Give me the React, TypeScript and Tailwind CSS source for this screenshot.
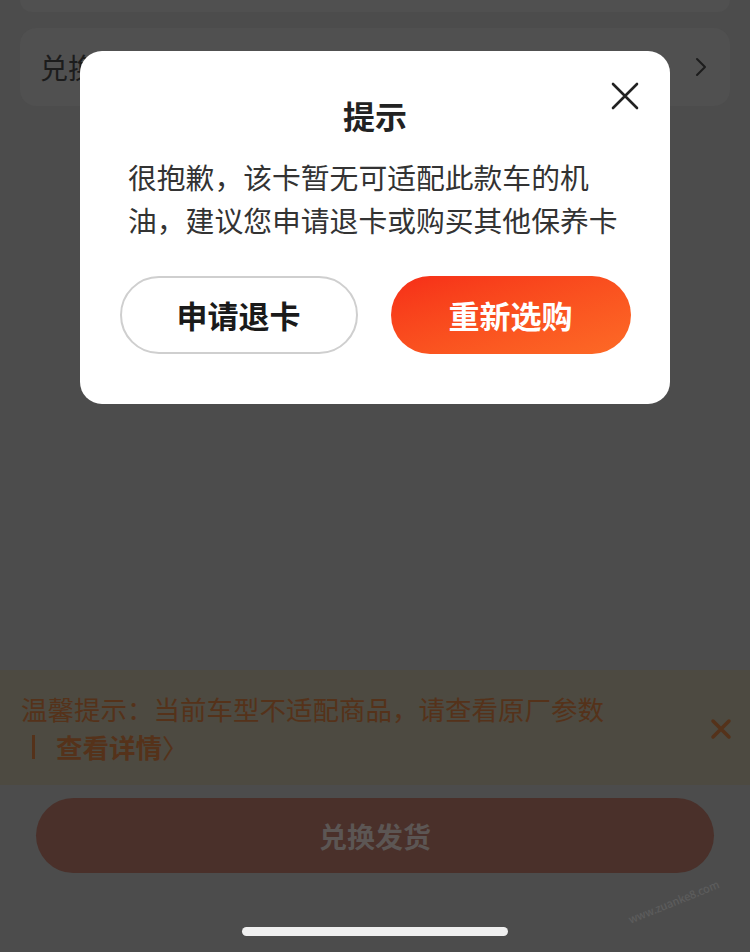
import React from "react";

export default function App() {
  const font = { fontFamily: '"Noto Sans CJK SC", "Noto Sans", sans-serif' };
  return (
    <div className="relative w-[750px] h-[952px] overflow-hidden bg-[#4c4c4c]" style={font}>
      {/* background page (dimmed) */}
      <div className="flex flex-col h-full">
        <div className="mx-[20px] h-[12px] rounded-b-[16px] bg-[#505050]" />
        <div className="mx-[20px] mt-[16px] h-[78px] rounded-[16px] bg-[#505050] flex items-center justify-between pl-[20px] pr-[22px]">
          <span className="text-[28px] text-[#1c1c1c] leading-none">兑换商品</span>
          <svg width="14" height="22" viewBox="0 0 14 22" fill="none">
            <path d="M3 3l8 8-8 8" stroke="#1c1c1c" strokeWidth="2" strokeLinecap="round" strokeLinejoin="round" />
          </svg>
        </div>
        <div className="flex-1" />
        <div className="h-[115px] bg-[#4d4a41] flex items-center pl-[21px] pr-[18px] mb-[13px]">
          <div className="flex-1 text-[26.5px] leading-[38px] text-[#55321a]">
            <div className="whitespace-nowrap">温馨提示：当前车型不适配商品，请查看原厂参数</div>
            <div className="whitespace-nowrap flex items-center">
              <span className="inline-block w-[3px] h-[24px] bg-[#55321a] ml-[11px] mr-[21px]" />
              <span className="font-bold">查看详情</span>
              <span>〉</span>
            </div>
          </div>
          <svg width="22" height="22" viewBox="0 0 22 22" className="mt-[2px]">
            <path d="M3 3l16 16M19 3L3 19" stroke="#55321a" strokeWidth="3.5" strokeLinecap="round" />
          </svg>
        </div>
        <div className="mx-[36px] h-[75px] rounded-full bg-[#4a302a] flex items-center justify-center">
          <span className="text-[28px] font-bold text-[#5c5654]">兑换发货</span>
        </div>
        <div className="h-[79px] pt-[54px] flex justify-center">
          <div className="w-[266px] h-[9px] rounded-full bg-[#efefef]" />
        </div>
      </div>

      {/* watermark */}
      <div className="absolute left-[625px] top-[895px] -rotate-[22deg] text-[11px] leading-[12px] text-white/10 whitespace-nowrap pointer-events-none">
        www.zuanke8.com
      </div>

      {/* modal */}
      <div className="absolute left-[80px] top-[51px] w-[590px] h-[353px] bg-white rounded-[22px] flex flex-col items-center">
        <button className="absolute right-[31px] top-[31px]" aria-label="close">
          <svg width="28" height="28" viewBox="0 0 28 28">
            <path d="M2 2l24 24M26 2L2 26" stroke="#222" strokeWidth="2.6" strokeLinecap="round" />
          </svg>
        </button>
        <div className="mt-[44px] text-[32px] leading-[40px] font-bold text-[#222]">提示</div>
        <div className="mt-[20px] self-start ml-[48px] text-[28.8px] leading-[43px] text-[#333] whitespace-nowrap">
          <div>很抱歉，该卡暂无可适配此款车的机</div>
          <div>油，建议您申请退卡或购买其他保养卡</div>
        </div>
        <div className="mt-[35px] flex gap-[33px]">
          <div className="w-[238px] h-[78px] rounded-full border-2 border-[#cfcfcf] flex items-center justify-center">
            <span className="text-[31px] font-bold text-[#1a1a1a]">申请退卡</span>
          </div>
          <div className="w-[240px] h-[78px] rounded-full bg-gradient-to-br from-[#f62d18] to-[#fd6a26] flex items-center justify-center">
            <span className="text-[31px] font-bold text-white">重新选购</span>
          </div>
        </div>
      </div>
    </div>
  );
}
